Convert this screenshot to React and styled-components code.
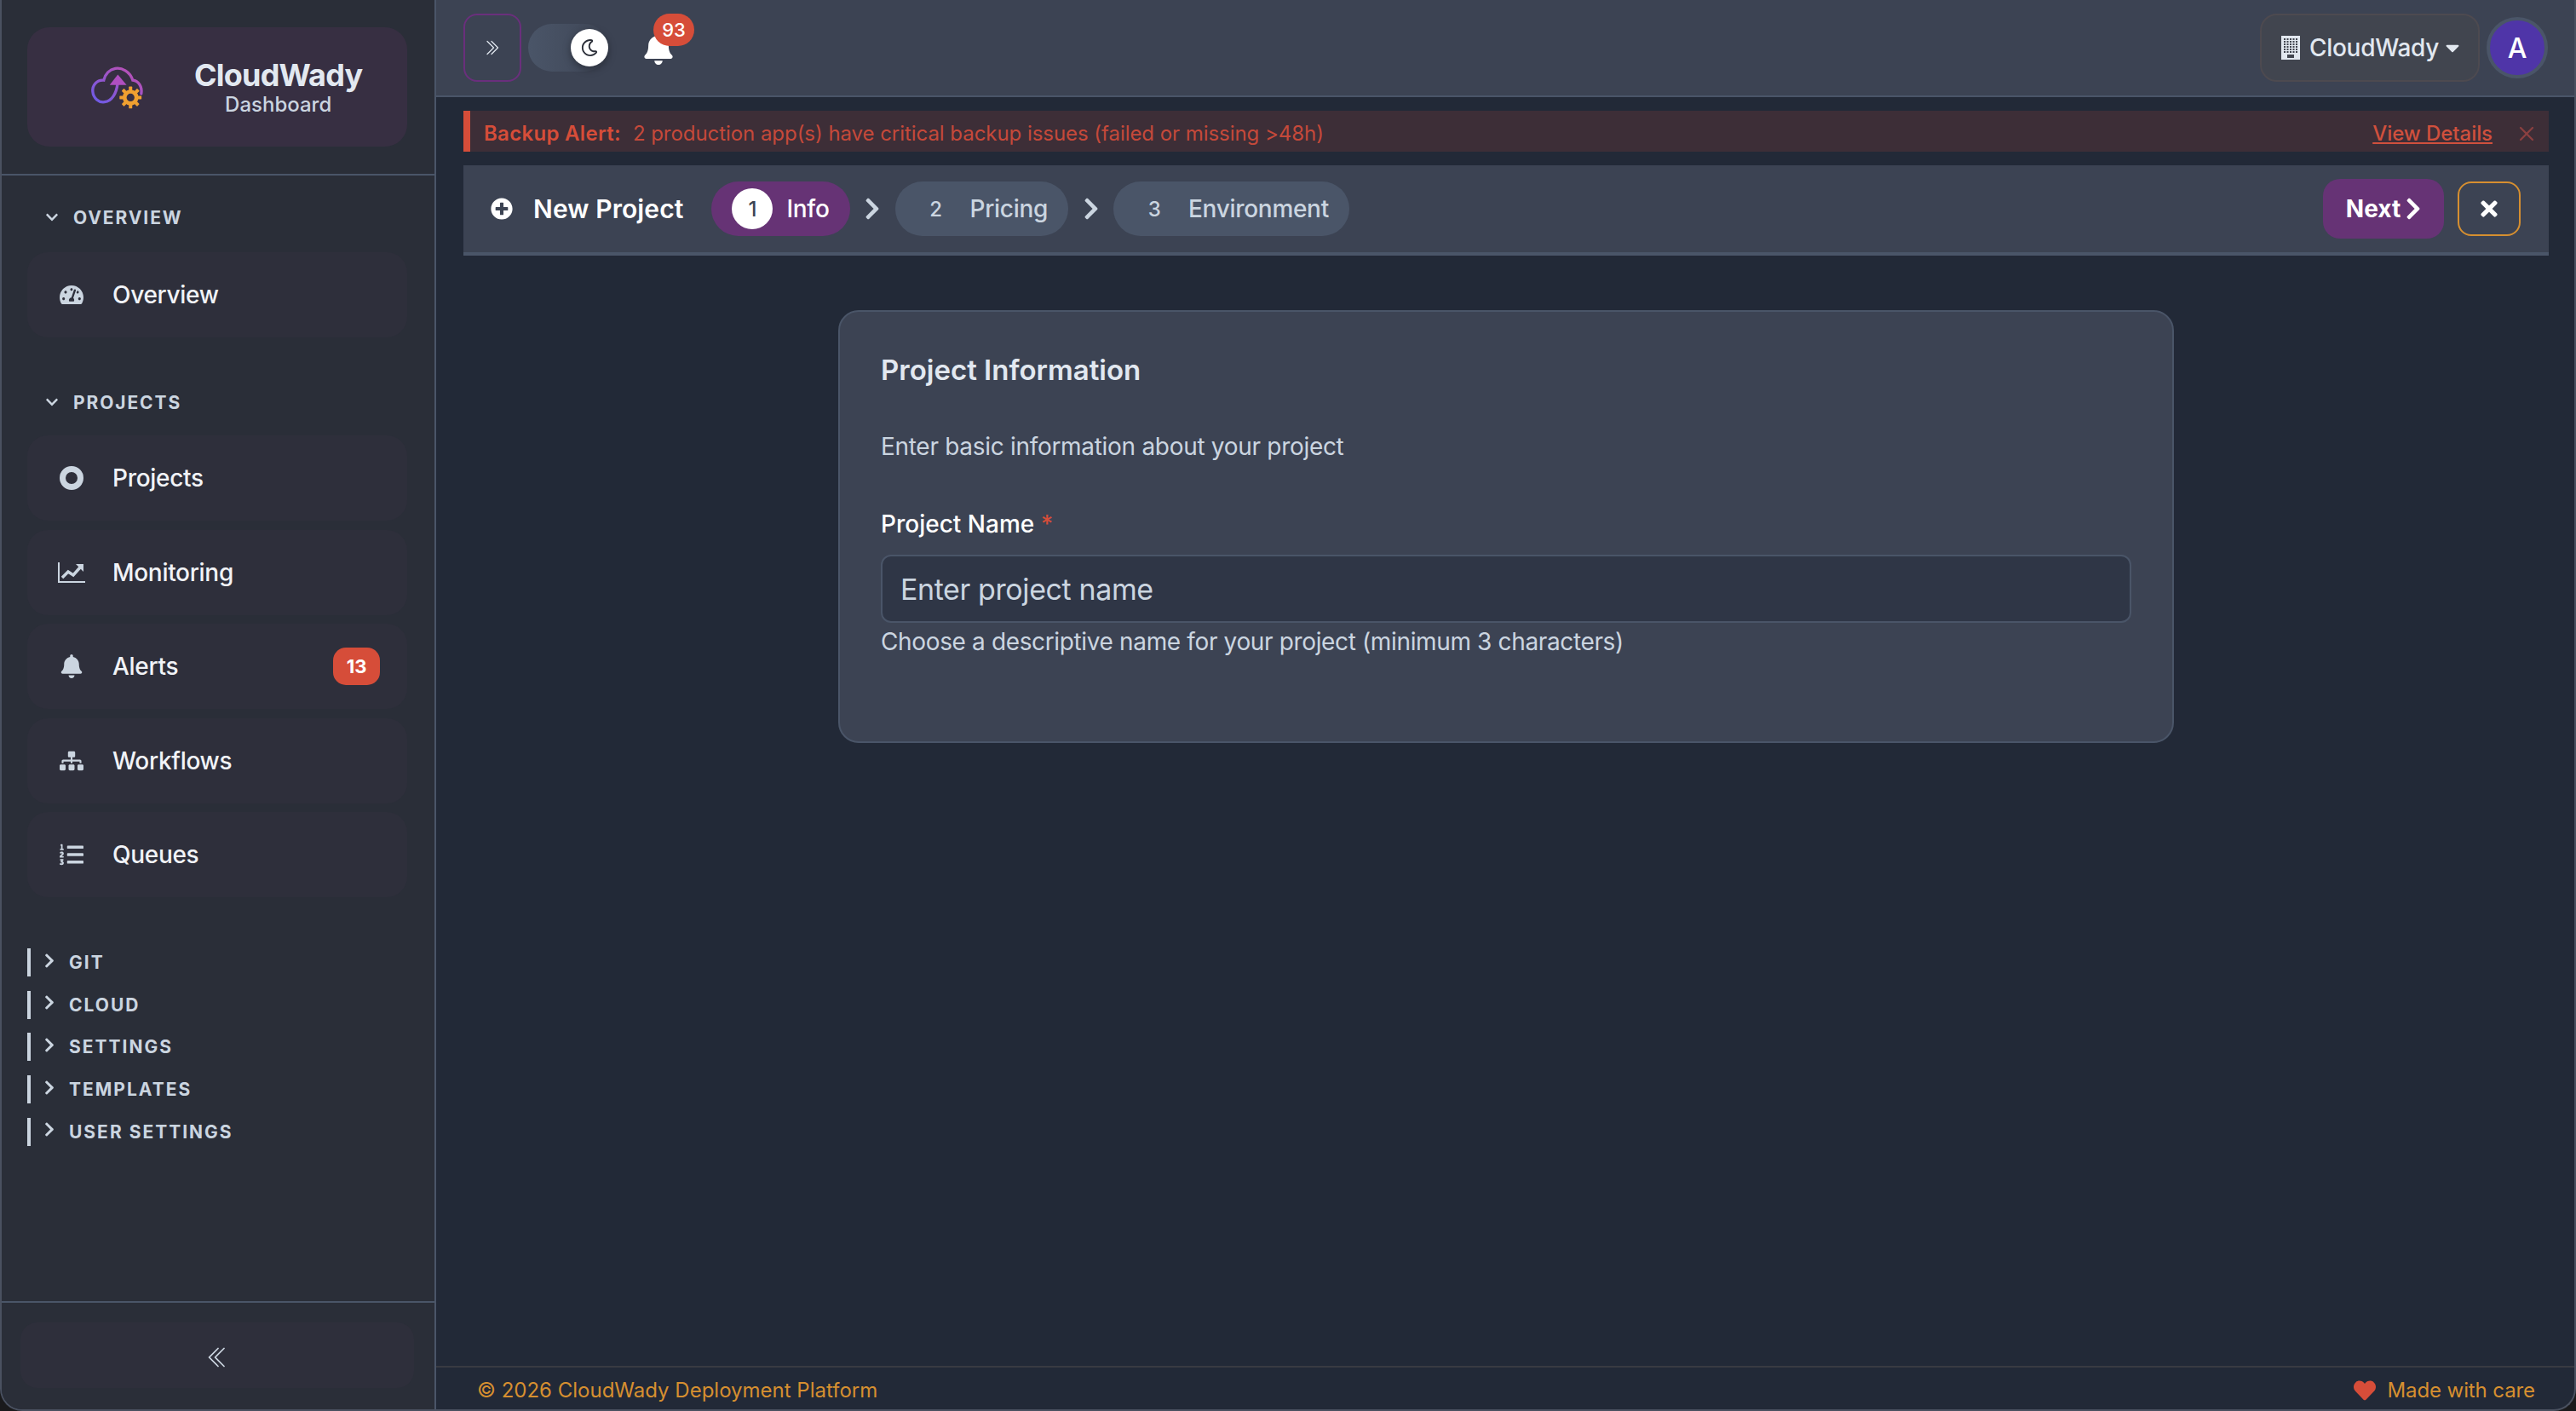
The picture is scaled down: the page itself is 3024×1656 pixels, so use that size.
import React from 'react'
import styled, { createGlobalStyle } from 'styled-components'
import {
  FaTachometerAlt, FaBell, FaSitemap, FaListOl, FaChevronDown, FaChevronRight,
  FaRegMoon, FaPlusCircle, FaTimes, FaCaretDown, FaHeart,
} from 'react-icons/fa'
import { BsChevronDoubleLeft, BsChevronDoubleRight } from 'react-icons/bs'
import { X } from 'lucide-react'

const GlobalStyle = createGlobalStyle`
  html, body { margin: 0; padding: 0; background: #1a1a1c; }
  body { font-family: Inter, "Noto Sans", sans-serif; }
  * { box-sizing: border-box; }
`

const Shell = styled.div`
  width: 3024px;
  height: 1656px;
  display: flex;
  overflow: hidden;
  border: 2px solid #4a5160;
  border-top: 0;
  border-radius: 0 0 26px 26px;
  background: #222937;
`

const Sidebar = styled.aside`
  width: 510px;
  flex: none;
  display: flex;
  flex-direction: column;
  background: #2a2e38;
  border-right: 2px solid #4a5568;
`

const Brand = styled.div`
  padding: 32px 32px 32px 30px;
  border-bottom: 2px solid #4a5568;
`

const BrandCard = styled.div`
  height: 140px;
  display: flex;
  align-items: center;
  gap: 58px;
  padding-left: 73px;
  border-radius: 26px;
  background: #372f42;
`

const BrandText = styled.div`
  display: flex;
  flex-direction: column;
  align-items: center;
`

const BrandName = styled.div`
  font-size: 36px;
  line-height: 40px;
  font-weight: 700;
  color: #e2e8f0;
  letter-spacing: -0.8px;
`

const BrandSub = styled.div`
  margin-top: 1px;
  font-size: 24px;
  line-height: 28px;
  font-weight: 500;
  color: #cbd5e0;
`

const Nav = styled.nav`
  flex: 1;
  padding: 33px 32px 0 30px;
`

const Section = styled.div`
  margin-bottom: 60px;
`

const SectionHead = styled.div`
  height: 32px;
  display: flex;
  align-items: center;
  gap: 17px;
  margin: 0 0 25px 21px;
  font-size: 21px;
  font-weight: 700;
  letter-spacing: 1.9px;
  color: #cbd5e0;
  svg { width: 16px; height: 16px; }
`

const ItemList = styled.div`
  display: flex;
  flex-direction: column;
  gap: 10.5px;
  margin-top: -2px;
`

const Item = styled.div`
  height: 100px;
  display: flex;
  align-items: center;
  padding: 0 32px 0 38px;
  border-radius: 24px;
  background: #2e2f3b;
  font-size: 28px;
  font-weight: 500;
  letter-spacing: -0.3px;
  color: #f1f3f7;
`

const ItemIcon = styled.span`
  width: 28px;
  margin-right: 34px;
  display: flex;
  justify-content: center;
  color: #cbd5e0;
  svg { width: 28px; height: 28px; flex: none; }
`

const ChartIcon = styled.svg`
  && { width: 32px; height: 24px; }
`

const Ring = styled.span`
  width: 28px;
  height: 28px;
  border: 7px solid #cbd5e0;
  border-radius: 50%;
`

const Count = styled.span`
  margin-left: auto;
  width: 55px;
  height: 44px;
  display: flex;
  align-items: center;
  justify-content: center;
  border-radius: 15px;
  background: #d64d39;
  color: #fff;
  font-size: 22px;
  font-weight: 700;
  letter-spacing: 0;
`

const Collapsed = styled.div`
  display: flex;
  flex-direction: column;
  gap: 16.7px;
`

const CollapsedHead = styled.div`
  height: 33px;
  display: flex;
  align-items: center;
  gap: 17px;
  padding-left: 16px;
  border-left: 4px solid #cbd5e0;
  font-size: 21px;
  font-weight: 700;
  letter-spacing: 2px;
  color: #cbd5e0;
  svg { width: 12px; height: 19px; flex: none; margin-top: -5px; }
`

const SideFoot = styled.div`
  height: 127px;
  padding: 23px 24px 25px 22px;
  border-top: 2px solid #4a5568;
`

const CollapseBtn = styled.div`
  height: 77px;
  display: flex;
  align-items: center;
  justify-content: center;
  padding: 4px 0 0 2px;
  border-radius: 20px;
  background: #2e2f3b;
  color: #cbd5e0;
  svg { width: 28px; height: 28px; }
`

const Main = styled.div`
  flex: 1;
  min-width: 0;
  display: flex;
  flex-direction: column;
`

const Header = styled.header`
  height: 114px;
  flex: none;
  display: flex;
  align-items: center;
  padding: 0 31px 0 32px;
  background: #3c4353;
  border-bottom: 2px solid #4a5568;
`

const MenuBtn = styled.div`
  width: 68px;
  height: 80px;
  display: flex;
  align-items: center;
  justify-content: center;
  padding-right: 2px;
  border: 2px solid #6a2f7c;
  border-radius: 16px;
  color: #e2e8f0;
  svg { width: 20px; height: 20px; }
`

const ThemeToggle = styled.div`
  position: relative;
  width: 94px;
  height: 56px;
  margin-left: 8px;
  border-radius: 28px;
  background: linear-gradient(90deg, #4a5568, #3f4656);
`

const Knob = styled.span`
  position: absolute;
  right: 0;
  top: 6px;
  width: 44px;
  height: 44px;
  display: flex;
  align-items: center;
  justify-content: center;
  border-radius: 50%;
  background: #fff;
  color: #2a2e38;
  box-shadow: 0 3px 10px rgba(0, 0, 0, 0.35);
  svg { width: 20px; height: 20px; }
`

const BellWrap = styled.div`
  position: relative;
  width: 38px;
  height: 38px;
  margin: 2px 0 0 40px;
  color: #fff;
  svg { width: 38px; height: 38px; }
`

const BellBadge = styled.span`
  position: absolute;
  left: 13px;
  top: -22px;
  width: 48px;
  height: 38px;
  display: flex;
  align-items: center;
  justify-content: center;
  border-radius: 19px;
  background: #d64d39;
  color: #fff;
  font-size: 22px;
  font-weight: 500;
`

const OrgBtn = styled.div`
  margin-left: auto;
  width: 258px;
  height: 80px;
  display: flex;
  align-items: center;
  padding-left: 23px;
  border: 2px solid #4d4a50;
  border-radius: 20px;
  background: #41454f;
  color: #e2e8f0;
  font-size: 28px;
  font-weight: 500;
  letter-spacing: -0.3px;
`

const OrgIcon = styled.svg`
  width: 22px;
  height: 28px;
  margin-right: 11px;
  flex: none;
`

const OrgCaret = styled.span`
  display: flex;
  margin-left: 8px;
  svg { width: 16px; height: 26px; }
`

const Avatar = styled.div`
  width: 72px;
  height: 72px;
  margin-left: 8px;
  display: flex;
  align-items: center;
  justify-content: center;
  border: 4px solid #4a5568;
  border-radius: 50%;
  background: #4f35a8;
  color: #fff;
  font-size: 32px;
  font-weight: 500;
`

const Content = styled.main`
  flex: 1;
  padding: 16px 30px 0 32px;
`

const Alert = styled.div`
  height: 48px;
  display: flex;
  align-items: center;
  padding: 5px 12px 0 16px;
  border-left: 8px solid #d64d39;
  background: #3d2e37;
  color: #c5493a;
  font-size: 24px;
  letter-spacing: -0.05px;
`

const AlertTitle = styled.strong`
  font-weight: 600;
  color: #d64d39;
  margin-right: 14px;
  letter-spacing: 0.3px;
`

const AlertLink = styled.span`
  margin-left: auto;
  font-weight: 500;
  color: #d0503d;
  text-decoration: underline;
`

const AlertClose = styled.span`
  display: flex;
  margin-left: 26px;
  color: #8a4040;
  svg { width: 28px; height: 28px; }
`

const WizardBar = styled.div`
  height: 106px;
  margin-top: 16px;
  display: flex;
  align-items: center;
  padding: 0 33px 0 32px;
  background: #3c4353;
  border-bottom: 4px solid #4a5568;
`

const WizardTitle = styled.div`
  display: flex;
  align-items: center;
  gap: 24px;
  margin-right: 33px;
  color: #fff;
  font-size: 30px;
  font-weight: 600;
  letter-spacing: 0.1px;
  svg { width: 26px; height: 26px; }
`

const Steps = styled.div`
  display: flex;
  align-items: center;
  gap: 17.5px;
`

const Step = styled.div`
  height: 64px;
  display: flex;
  align-items: center;
  gap: 16px;
  padding: 0 24px;
  border-radius: 32px;
  background: ${(p) => (p.$active ? '#663375' : '#4a5568')};
  color: ${(p) => (p.$active ? '#fff' : '#cbd5e0')};
  font-size: 28px;
  font-weight: 500;
  letter-spacing: -0.3px;
`

const StepNum = styled.span`
  width: 48px;
  height: 48px;
  display: flex;
  align-items: center;
  justify-content: center;
  border-radius: 50%;
  background: ${(p) => (p.$active ? '#fff' : 'transparent')};
  color: ${(p) => (p.$active ? '#3c4353' : '#cbd5e0')};
  font-size: 24px;
  font-weight: 500;
`

const StepArrow = styled.span`
  display: flex;
  color: #cbd5e0;
  svg { width: 18px; height: 30px; }
`

const WizardActions = styled.div`
  margin-left: auto;
  display: flex;
  align-items: center;
  gap: 16px;
`

const NextBtn = styled.div`
  width: 142px;
  height: 70px;
  display: flex;
  align-items: center;
  justify-content: center;
  gap: 6px;
  border-radius: 20px;
  background: #663375;
  color: #fff;
  font-size: 28px;
  font-weight: 700;
  svg { width: 18px; height: 30px; }
`

const CloseBtn = styled.div`
  width: 74px;
  height: 64px;
  display: flex;
  align-items: center;
  justify-content: center;
  border: 2px solid #d68f30;
  border-radius: 16px;
  color: #fff;
  svg { width: 20px; height: 28px; }
`

const Card = styled.section`
  width: 1568px;
  height: 508px;
  margin: 64px auto 0;
  padding: 48px 48px 0;
  border: 2px solid #4a5568;
  border-radius: 24px;
  background: #3c4353;
`

const CardTitle = styled.h2`
  margin: 0;
  font-size: 33px;
  line-height: 40px;
  font-weight: 600;
  color: #e2e8f0;
`

const CardDesc = styled.p`
  margin: 50px 0 0;
  font-size: 28px;
  line-height: 40px;
  letter-spacing: -0.3px;
  color: #cbd5e0;
`

const FieldLabel = styled.label`
  display: block;
  margin-top: 51px;
  font-size: 28px;
  line-height: 40px;
  font-weight: 500;
  color: #fff;
`

const Required = styled.span`
  color: #d64d39;
`

const NameInput = styled.input`
  display: block;
  width: 100%;
  height: 80px;
  margin-top: 16px;
  padding: 0 21px;
  border: 2px solid #4a5568;
  border-radius: 12px;
  background: #2f3646;
  outline: none;
  color: #e2e8f0;
  font-family: inherit;
  font-size: 34px;
  letter-spacing: -0.4px;
  &::placeholder { color: #cbd5e0; opacity: 1; }
`

const Help = styled.div`
  margin-top: 2px;
  font-size: 28px;
  line-height: 40px;
  letter-spacing: -0.36px;
  color: #cbd5e0;
`

const Footer = styled.footer`
  height: 51px;
  flex: none;
  display: flex;
  align-items: center;
  justify-content: space-between;
  padding: 4px 46px 0 48px;
  border-top: 2px solid #393a42;
  color: #d68f30;
  font-size: 24px;
`

const Care = styled.div`
  display: flex;
  align-items: center;
  gap: 14px;
  letter-spacing: -0.1px;
  svg { width: 26px; height: 26px; color: #d64d39; }
`

function Logo() {
  return (
    <svg width="65" height="53" viewBox="105 95 195 160" style={{ flex: 'none' }}>
      <defs>
        <linearGradient id="cloudGrad" x1="0" y1="1" x2="1" y2="0">
          <stop offset="0" stopColor="#6b5be8" />
          <stop offset="1" stopColor="#c64fae" />
        </linearGradient>
      </defs>
      <path
        d="M288 198 C292 172 278 152 258 150 C248 118 218 104 196 108 C176 112 160 128 155 150 C130 148 114 168 116 190 C118 214 138 230 158 227 C184 224 200 196 204 162"
        fill="none"
        stroke="url(#cloudGrad)"
        strokeWidth="10"
        strokeLinecap="round"
      />
      <path d="M205 130 L236 167 L176 167 Z" fill="#b04fc0" />
      <g transform="translate(250 211)" fill="#f0a030">
        <circle r="21" fill="none" stroke="#f0a030" strokeWidth="14" />
        {[0, 45, 90, 135, 180, 225, 270, 315].map((a) => (
          <rect key={a} x="-6" y="-39" width="12" height="14" rx="2" transform={`rotate(${a})`} />
        ))}
      </g>
    </svg>
  )
}

function LineChart() {
  return (
    <ChartIcon viewBox="0 0 32 24">
      <path d="M1 0 V23 H32" fill="none" stroke="currentColor" strokeWidth="2" />
      <path d="M5 18 L12 11 L18 15 L26 6" fill="none" stroke="currentColor" strokeWidth="3.5" />
      <path d="M21 2 L30 2 L30 11 Z" fill="currentColor" />
    </ChartIcon>
  )
}

function OfficeBuilding() {
  const cols = [4, 7.5, 11, 14.5, 18]
  const rows = [3, 6, 9, 12, 15, 18]
  return (
    <OrgIcon viewBox="0 0 22 28">
      <rect width="22" height="28" fill="#e2e8f0" />
      {rows.map((y) => cols.map((x) => (
        <rect key={`${x}-${y}`} x={x - 1} y={y} width="2" height="2" fill="#41454f" />
      )))}
      <rect x="7" y="22" width="8" height="4" fill="#41454f" />
    </OrgIcon>
  )
}

const projectItems = [
  { label: 'Projects', icon: <Ring /> },
  { label: 'Monitoring', icon: <LineChart /> },
  { label: 'Alerts', icon: <FaBell />, count: 13 },
  { label: 'Workflows', icon: <FaSitemap /> },
  { label: 'Queues', icon: <FaListOl /> },
]

const closedSections = ['GIT', 'CLOUD', 'SETTINGS', 'TEMPLATES', 'USER SETTINGS']

export default function App() {
  return (
    <>
      <GlobalStyle />
      <Shell>
        <Sidebar>
          <Brand>
            <BrandCard>
              <Logo />
              <BrandText>
                <BrandName>CloudWady</BrandName>
                <BrandSub>Dashboard</BrandSub>
              </BrandText>
            </BrandCard>
          </Brand>
          <Nav>
            <Section>
              <SectionHead><FaChevronDown />OVERVIEW</SectionHead>
              <Item>
                <ItemIcon><FaTachometerAlt /></ItemIcon>
                Overview
              </Item>
            </Section>
            <Section>
              <SectionHead><FaChevronDown />PROJECTS</SectionHead>
              <ItemList>
                {projectItems.map((item) => (
                  <Item key={item.label}>
                    <ItemIcon>{item.icon}</ItemIcon>
                    {item.label}
                    {item.count && <Count>{item.count}</Count>}
                  </Item>
                ))}
              </ItemList>
            </Section>
            <Collapsed>
              {closedSections.map((name) => (
                <CollapsedHead key={name}><FaChevronRight />{name}</CollapsedHead>
              ))}
            </Collapsed>
          </Nav>
          <SideFoot>
            <CollapseBtn><BsChevronDoubleLeft /></CollapseBtn>
          </SideFoot>
        </Sidebar>
        <Main>
          <Header>
            <MenuBtn><BsChevronDoubleRight /></MenuBtn>
            <ThemeToggle>
              <Knob><FaRegMoon /></Knob>
            </ThemeToggle>
            <BellWrap>
              <FaBell />
              <BellBadge>93</BellBadge>
            </BellWrap>
            <OrgBtn>
              <OfficeBuilding />
              CloudWady
              <OrgCaret><FaCaretDown /></OrgCaret>
            </OrgBtn>
            <Avatar>A</Avatar>
          </Header>
          <Content>
            <Alert>
              <AlertTitle>Backup Alert:</AlertTitle>
              2 production app(s) have critical backup issues (failed or missing &gt;48h)
              <AlertLink>View Details</AlertLink>
              <AlertClose><X strokeWidth={2} /></AlertClose>
            </Alert>
            <WizardBar>
              <WizardTitle><FaPlusCircle />New Project</WizardTitle>
              <Steps>
                <Step $active><StepNum $active>1</StepNum>Info</Step>
                <StepArrow><FaChevronRight /></StepArrow>
                <Step><StepNum>2</StepNum>Pricing</Step>
                <StepArrow><FaChevronRight /></StepArrow>
                <Step><StepNum>3</StepNum>Environment</Step>
              </Steps>
              <WizardActions>
                <NextBtn>Next<FaChevronRight /></NextBtn>
                <CloseBtn><FaTimes /></CloseBtn>
              </WizardActions>
            </WizardBar>
            <Card>
              <CardTitle>Project Information</CardTitle>
              <CardDesc>Enter basic information about your project</CardDesc>
              <FieldLabel>Project Name <Required>*</Required></FieldLabel>
              <NameInput placeholder="Enter project name" />
              <Help>Choose a descriptive name for your project (minimum 3 characters)</Help>
            </Card>
          </Content>
          <Footer>
            <div>© 2026 CloudWady Deployment Platform</div>
            <Care><FaHeart />Made with care</Care>
          </Footer>
        </Main>
      </Shell>
    </>
  )
}
